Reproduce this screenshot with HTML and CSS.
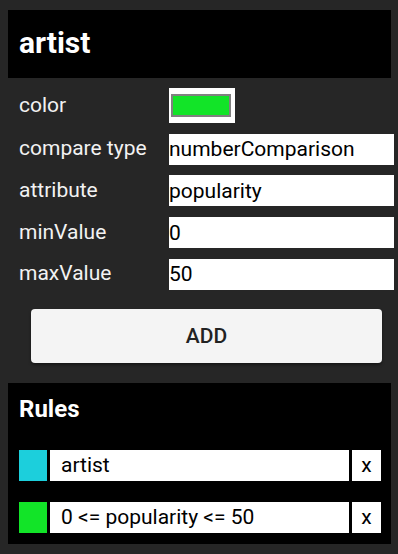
FILE: index.html
```html
<!DOCTYPE html>
<html lang="en">
<head>
    <meta charset="UTF-8">
    <meta name="viewport" content="width=device-width, initial-scale=1.0">
    <title>Rule Editor</title>
    <link rel="stylesheet" href="styles.css">
</head>
<body>
    <div class="panel">
        <div class="header">
            <h1>artist</h1>
        </div>

        <!-- New rule form -->
        <div class="form">
            <div class="row row-color">
                <label>color</label>
                <div class="swatch-box"><div class="swatch" style="background-color: #12e428;"></div></div>
            </div>
            <div class="row">
                <label>compare type</label>
                <input type="text" value="numberComparison">
            </div>
            <div class="row">
                <label>attribute</label>
                <input type="text" value="popularity">
            </div>
            <div class="row">
                <label>minValue</label>
                <input type="text" value="0">
            </div>
            <div class="row">
                <label>maxValue</label>
                <input type="text" value="50">
            </div>
        </div>

        <button class="add-button">ADD</button>

        <!-- Existing rules -->
        <div class="rules">
            <h2>Rules</h2>
            <div class="rule">
                <div class="rule-color" style="background-color: #1ccfdc;"></div>
                <div class="rule-text">artist</div>
                <button class="rule-remove">x</button>
            </div>
            <div class="rule">
                <div class="rule-color" style="background-color: #12e428;"></div>
                <div class="rule-text">0 &lt;= popularity &lt;= 50</div>
                <button class="rule-remove">x</button>
            </div>
        </div>
    </div>
</body>
</html>
```

FILE: styles.css
```css
html, body {
    margin: 0;
    height: 100%;
}
body {
    background-color: #262626;
    font-family: Roboto, "Liberation Sans", sans-serif;
    overflow: hidden;
}
.panel {
    padding: 10px 7px 0 8px;
}
.header {
    background-color: #000;
    height: 65px;
    padding: 0 0 3px 11px;
    display: flex;
    align-items: center;
}
h1 {
    margin: 0;
    color: #fff;
    font-size: 30px;
    font-weight: bold;
}
.form {
    display: flex;
    flex-direction: column;
    gap: 10.7px;
    margin-top: 10px;
}
.row {
    display: flex;
    align-items: center;
    height: 31px;
}
.row-color {
    height: 35px;
}
.row label {
    width: 150px;
    padding: 0 0 2px 11px;
    color: #f2f2f2;
    font-size: 21px;
}
.swatch-box {
    width: 66px;
    height: 35px;
    background-color: #fff;
    display: flex;
    align-items: center;
    justify-content: center;
}
.swatch {
    width: 56px;
    height: 19px;
    border: 2px solid #808080;
    margin-right: 2px;
}
.row input[type=text] {
    width: 225px;
    height: 31px;
    margin-right: -3px;
    box-sizing: border-box;
    border: none;
    padding: 0;
    background-color: #fff;
    color: #000;
    font-family: Roboto, "Liberation Sans", sans-serif;
    font-size: 21px;
}
.add-button {
    display: block;
    width: 351px;
    height: 54px;
    margin: 19px 0 20px 23px;
    background-color: #f4f4f4;
    border: none;
    border-radius: 4px;
    box-shadow: 0 2px 3px rgba(0, 0, 0, 0.4);
    color: #222;
    font-family: Roboto, "Liberation Sans", sans-serif;
    font-size: 21px;
    font-weight: 500;
}
.rules {
    background-color: #000;
    padding: 11px 10px 11px 11px;
}
h2 {
    margin: 0 0 26px 0;
    color: #fff;
    font-size: 24px;
    font-weight: bold;
    line-height: 30px;
}
.rule {
    display: flex;
    gap: 3px;
    height: 31px;
    margin-top: 21px;
}
h2 + .rule {
    margin-top: 0;
}
.rule-color {
    width: 28px;
}
.rule-text {
    flex: 1;
    background-color: #fff;
    color: #000;
    font-size: 21px;
    line-height: 31px;
    padding-left: 11px;
}
.rule-remove {
    width: 29px;
    border: none;
    padding: 0;
    background-color: #fff;
    color: #000;
    font-family: Roboto, "Liberation Sans", sans-serif;
    font-size: 21px;
}
```
